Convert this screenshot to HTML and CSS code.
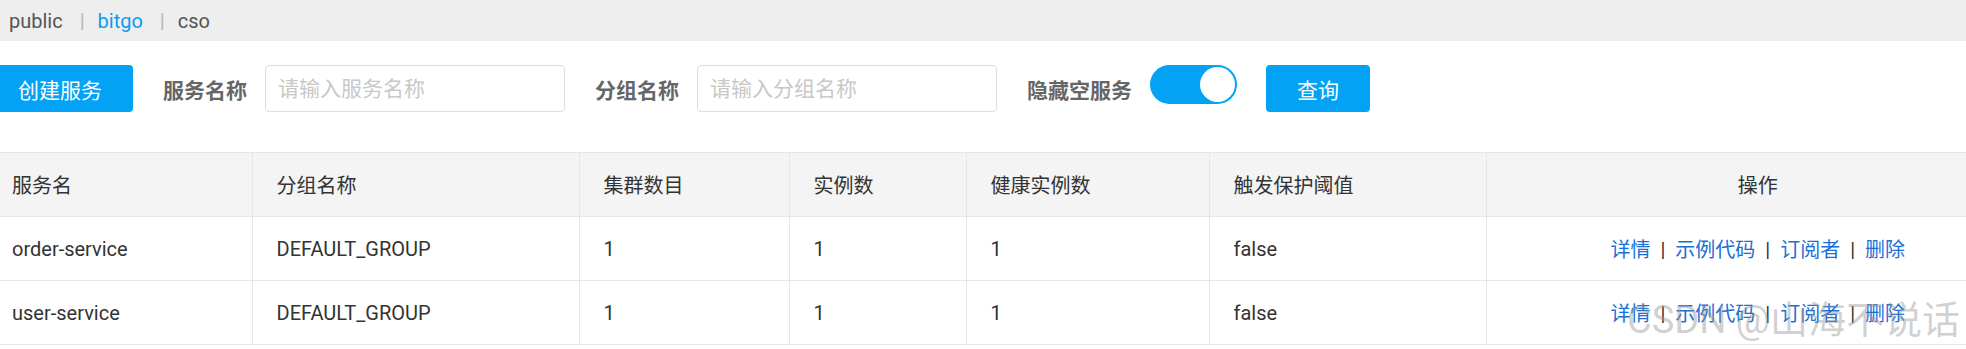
FILE: index.html
```html
<!DOCTYPE html>
<html lang="zh-CN">
<head>
    <meta charset="UTF-8">
    <title>服务列表</title>
    <link rel="stylesheet" href="styles.css">
</head>
<body>
    <div class="topbar">
        <span class="ns">public</span>
        <span class="ns-sep">|</span>
        <span class="ns ns-active">bitgo</span>
        <span class="ns-sep">|</span>
        <span class="ns">cso</span>
    </div>

    <div class="toolbar">
        <button class="btn btn-create">创建服务</button>
        <label class="field-label" for="serviceName">服务名称</label>
        <input class="field-input" id="serviceName" type="text" placeholder="请输入服务名称">
        <label class="field-label" for="groupName">分组名称</label>
        <input class="field-input" id="groupName" type="text" placeholder="请输入分组名称">
        <span class="field-label">隐藏空服务</span>
        <span class="switch"><span class="switch-knob"></span></span>
        <button class="btn btn-query">查询</button>
    </div>

    <div class="table-wrap">
        <table class="service-table">
            <colgroup>
                <col style="width: 252px">
                <col style="width: 327px">
                <col style="width: 210px">
                <col style="width: 177px">
                <col style="width: 243px">
                <col style="width: 277px">
                <col>
            </colgroup>
            <thead>
                <tr>
                    <th>服务名</th>
                    <th>分组名称</th>
                    <th>集群数目</th>
                    <th>实例数</th>
                    <th>健康实例数</th>
                    <th>触发保护阈值</th>
                    <th class="col-actions">操作</th>
                </tr>
            </thead>
            <tbody>
                <tr>
                    <td>order-service</td>
                    <td>DEFAULT_GROUP</td>
                    <td>1</td>
                    <td>1</td>
                    <td>1</td>
                    <td>false</td>
                    <td class="col-actions">
                        <a href="#">详情</a><span class="link-sep">|</span><a href="#">示例代码</a><span class="link-sep">|</span><a href="#">订阅者</a><span class="link-sep">|</span><a href="#">删除</a>
                    </td>
                </tr>
                <tr>
                    <td>user-service</td>
                    <td>DEFAULT_GROUP</td>
                    <td>1</td>
                    <td>1</td>
                    <td>1</td>
                    <td>false</td>
                    <td class="col-actions">
                        <a href="#">详情</a><span class="link-sep">|</span><a href="#">示例代码</a><span class="link-sep">|</span><a href="#">订阅者</a><span class="link-sep">|</span><a href="#">删除</a>
                    </td>
                </tr>
            </tbody>
        </table>
    </div>

    <div class="watermark">CSDN @山海不说话</div>
</body>
</html>
```

FILE: styles.css
```css
body {
    margin: 0;
    font-family: Roboto, "Noto Sans CJK SC", sans-serif;
    color: #333;
    background-color: #fff;
    overflow: hidden;
    position: relative;
}

/* namespace bar */
.topbar {
    height: 41px;
    background-color: #eeeeee;
    display: flex;
    align-items: center;
    padding-left: 9px;
    font-size: 20px;
    color: #555;
}

.ns-active {
    color: #0d9cf2;
}

.ns-sep {
    color: #b5b5b5;
    margin: 0 13px 0 17px;
}

/* search bar */
.toolbar {
    display: flex;
    align-items: center;
    padding: 24px 0 40px 0;
}

.btn {
    height: 47px;
    padding: 0 31px;
    border: none;
    border-radius: 4px;
    background-color: #03a2f4;
    color: #fff;
    font-family: Roboto, "Noto Sans CJK SC", sans-serif;
    font-size: 21px;
    cursor: pointer;
}

.btn-create {
    margin-left: -13px;
}

.btn-query {
    margin-left: 29px;
}

.field-label {
    margin-left: 30px;
    margin-right: 18px;
    font-size: 21px;
    font-weight: bold;
    color: #666;
}

.field-input {
    box-sizing: border-box;
    width: 300px;
    height: 47px;
    padding: 0 12px;
    border: 1px solid #dcdcdc;
    border-radius: 4px;
    font-family: Roboto, "Noto Sans CJK SC", sans-serif;
    font-size: 21px;
    color: #333;
    outline: none;
}

.field-input::placeholder {
    color: #c8c8c8;
}

.switch {
    position: relative;
    width: 87px;
    height: 39px;
    border-radius: 20px;
    background-color: #03a2f4;
    align-self: flex-start;
}

.switch-knob {
    position: absolute;
    top: 2px;
    right: 2px;
    width: 35px;
    height: 35px;
    border-radius: 50%;
    background-color: #fff;
}

/* table */
.table-wrap {
    width: 100%;
    overflow: hidden;
}

.service-table {
    width: 2030px;
    border-collapse: collapse;
    table-layout: fixed;
    font-size: 20px;
}

.service-table th,
.service-table td {
    height: 63px;
    padding: 0 0 0 24px;
    border: 1px solid #e6e6e6;
    text-align: left;
    font-weight: normal;
    color: #333;
    white-space: nowrap;
}

.service-table th {
    background-color: #f4f4f4;
}

.service-table th:first-child,
.service-table td:first-child {
    padding-left: 12px;
    border-left: none;
}

.service-table .col-actions {
    text-align: center;
    padding: 0;
}

.col-actions a {
    color: #1a6fd6;
    text-decoration: none;
}

.link-sep {
    margin: 0 10px;
    color: #333;
}

.watermark {
    position: absolute;
    left: 1627px;
    top: 289px;
    font-size: 38px;
    color: rgba(150, 150, 150, 0.45);
    white-space: nowrap;
    pointer-events: none;
}
```
